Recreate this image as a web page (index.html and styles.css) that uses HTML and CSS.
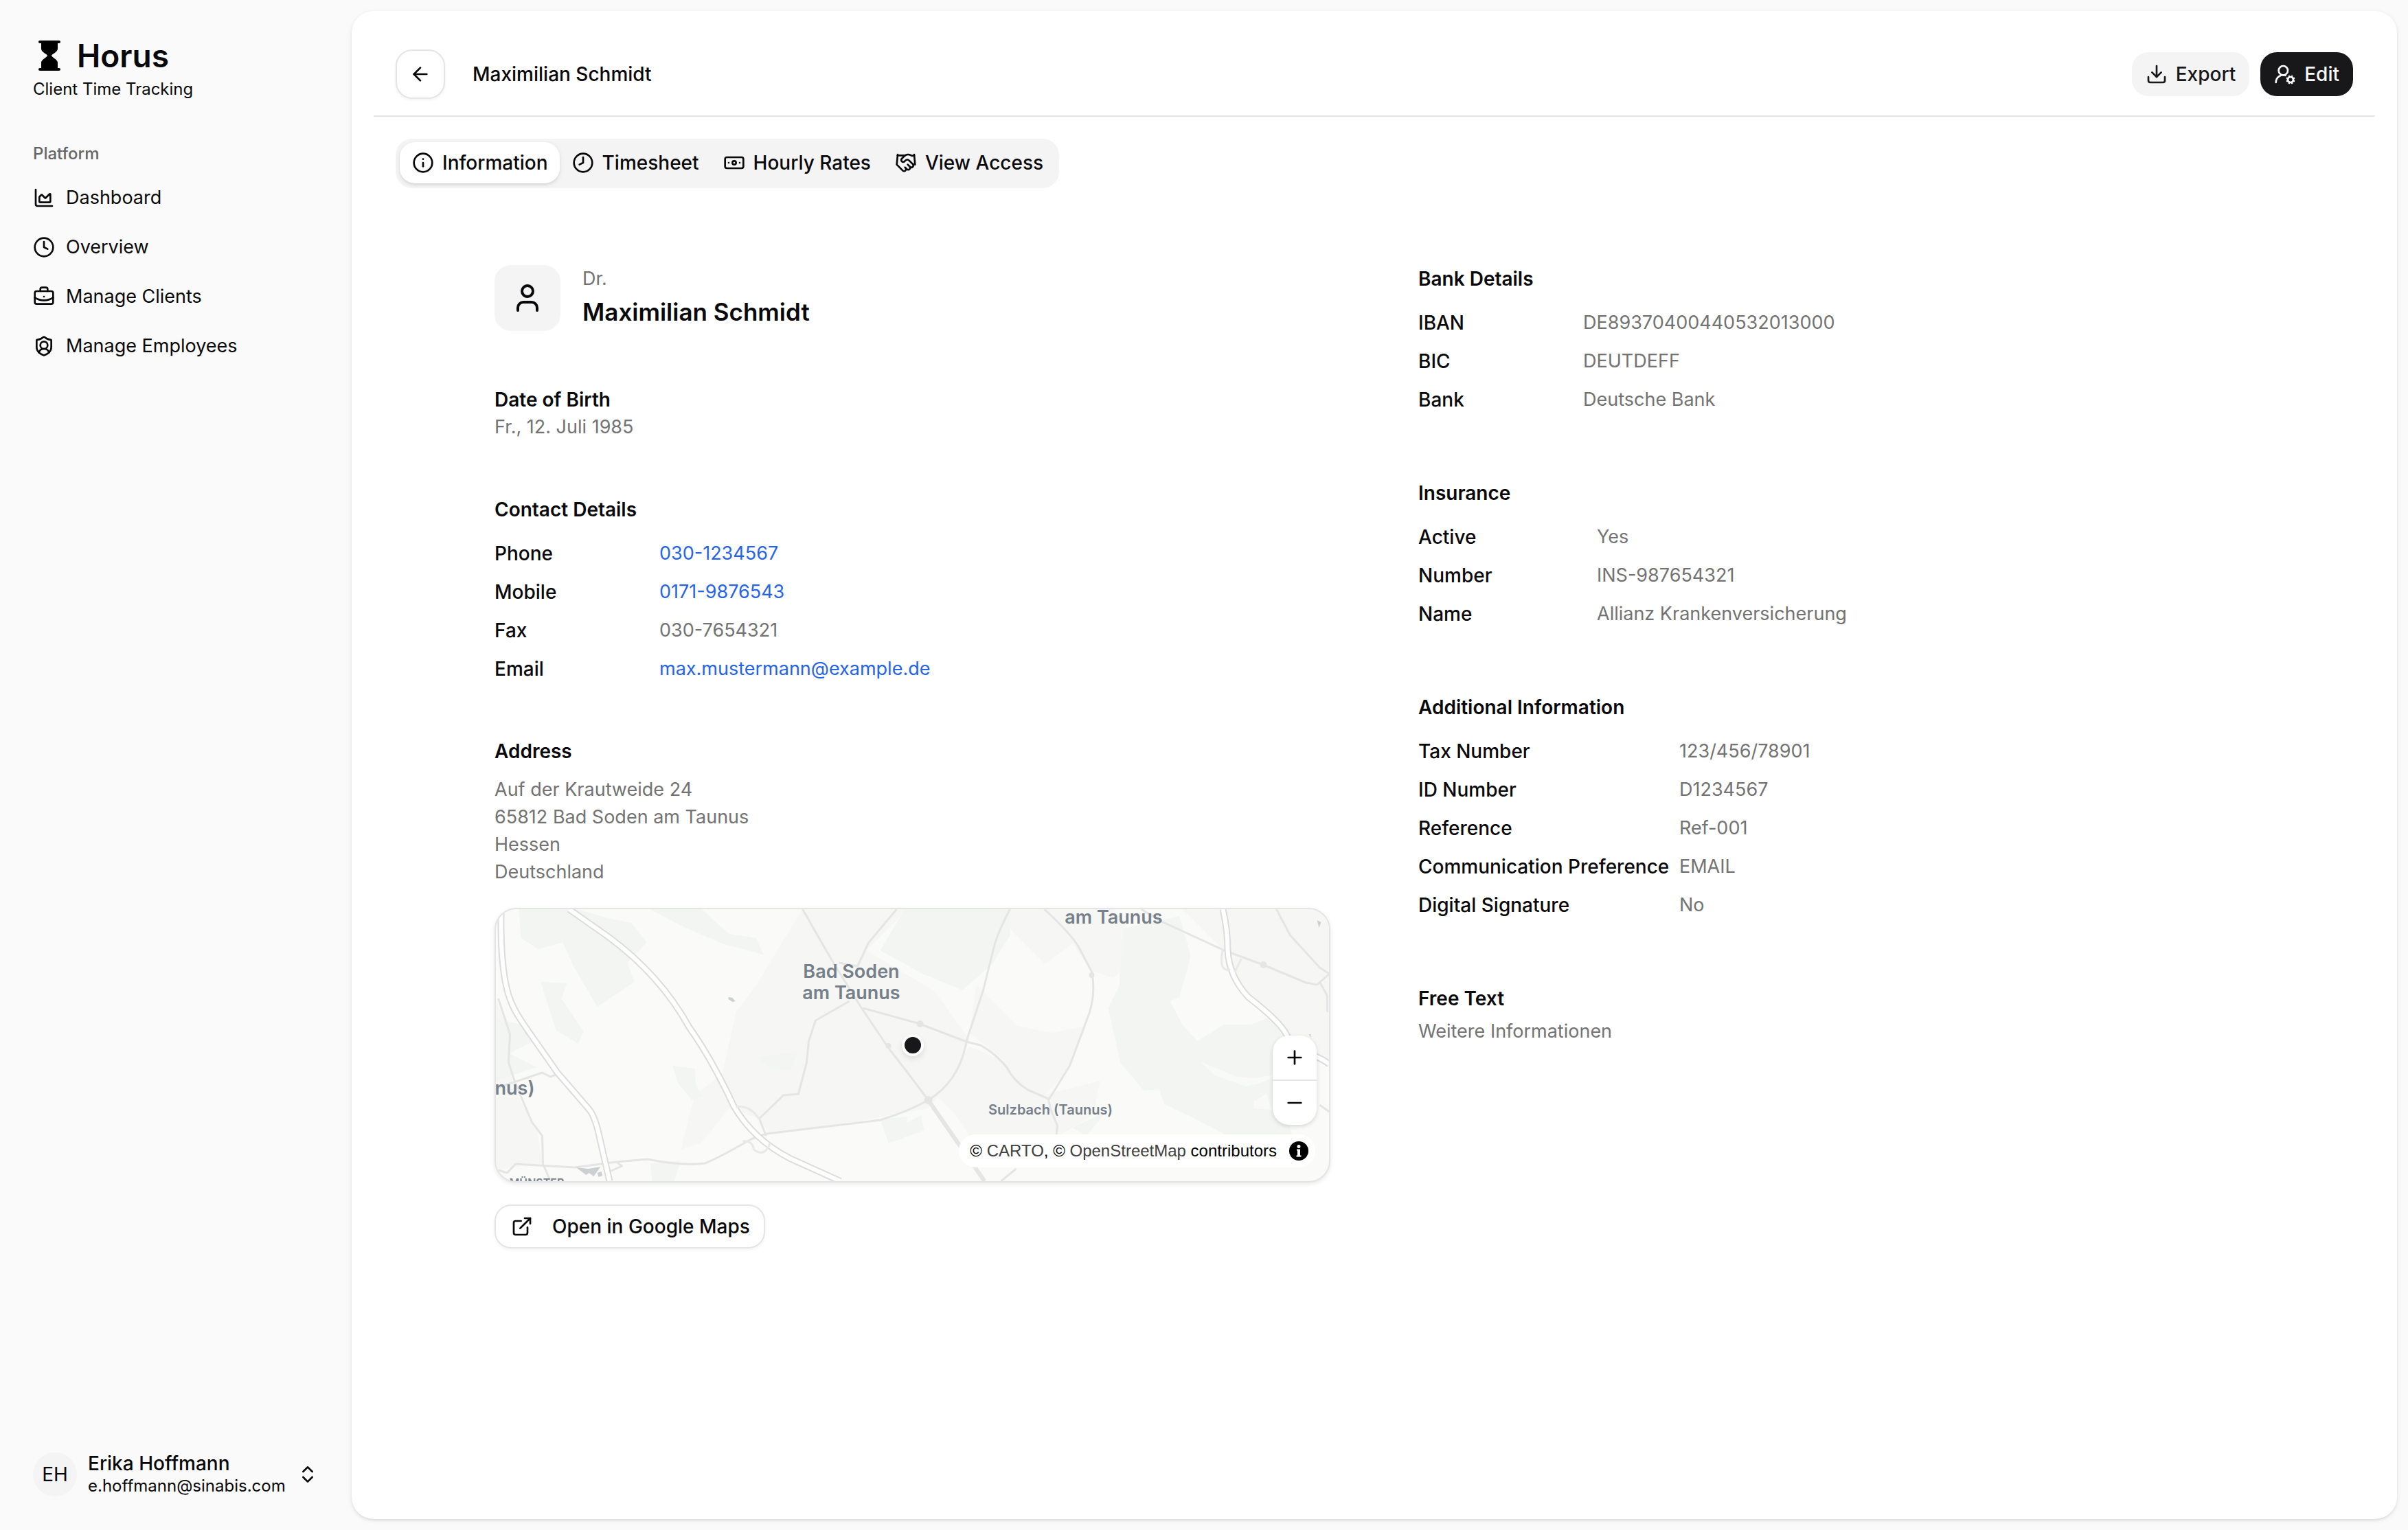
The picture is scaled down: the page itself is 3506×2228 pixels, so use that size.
FILE: index.html
```html
<!DOCTYPE html>
<html lang="en">
<head>
<meta charset="utf-8">
<meta name="viewport" content="width=device-width, initial-scale=1">
<title>Horus – Maximilian Schmidt</title>
<link rel="stylesheet" href="styles.css">
</head>
<body>
<div class="app">
  <aside class="sidebar">
    <div class="brand">
      <div class="brand-row">
        <svg class="brand-mark" viewBox="0 0 32 44" aria-hidden="true"><path d="M2 0h28a2 2 0 0 1 0 4h-2v8c0 5-9 8-9 10s9 6 9 10v8h2a2 2 0 0 1 0 4H2a2 2 0 0 1 0-4h2v-8c0-4 9-8 9-10S4 17 4 12V4H2a2 2 0 0 1 0-4z"/></svg>
        <span class="brand-name">Horus</span>
      </div>
      <p class="brand-tagline">Client Time Tracking</p>
    </div>
    <nav class="nav" aria-label="Platform">
      <p class="nav-label">Platform</p>
      <a class="nav-link" href="#dashboard"><svg class="icon" viewBox="0 0 24 24"><path d="M3 3v16a2 2 0 0 0 2 2h16"/><path d="M7 11.207a.5.5 0 0 1 .146-.353l2-2a.5.5 0 0 1 .708 0l3.292 3.292a.5.5 0 0 0 .708 0l4.292-4.292a.5.5 0 0 1 .854.353V16a1 1 0 0 1-1 1H8a1 1 0 0 1-1-1z"/></svg>Dashboard</a>
      <a class="nav-link" href="#overview"><svg class="icon" viewBox="0 0 24 24"><circle cx="12" cy="12" r="10"/><path d="M12 6v6l4 2"/></svg>Overview</a>
      <a class="nav-link" href="#clients"><svg class="icon" viewBox="0 0 24 24"><path d="M12 12h.01"/><path d="M16 6V4a2 2 0 0 0-2-2h-4a2 2 0 0 0-2 2v2"/><path d="M22 13a18.150 18.150 0 0 1-20 0"/><rect width="20" height="14" x="2" y="6" rx="2"/></svg>Manage Clients</a>
      <a class="nav-link" href="#employees"><svg class="icon" viewBox="0 0 24 24"><path d="M20 13c0 5-3.500 7.500-7.660 8.950a1 1 0 0 1-.67-.01C7.500 20.500 4 18 4 13V6a1 1 0 0 1 1-1c2 0 4.500-1.200 6.240-2.720a1.170 1.170 0 0 1 1.520 0C14.510 3.810 17 5 19 5a1 1 0 0 1 1 1z"/><path d="M6.376 18.910a6 6 0 0 1 11.249.003"/><circle cx="12" cy="11" r="4"/></svg>Manage Employees</a>
    </nav>
    <button class="account" type="button">
      <span class="account-avatar">EH</span>
      <span class="account-text">
        <span class="account-name">Erika Hoffmann</span>
        <span class="account-mail">e.hoffmann@sinabis.com</span>
      </span>
      <svg class="icon" viewBox="0 0 24 24"><path d="m7 15 5 5 5-5"/><path d="m7 9 5-5 5 5"/></svg>
    </button>
  </aside>

  <main class="panel">
    <header class="topbar">
      <button class="back" type="button" aria-label="Back"><svg class="icon" viewBox="0 0 24 24"><path d="m12 19-7-7 7-7"/><path d="M19 12H5"/></svg></button>
      <h1 class="page-title">Maximilian Schmidt</h1>
      <div class="actions">
        <button class="btn btn-secondary" type="button"><svg class="icon" viewBox="0 0 24 24"><path d="M21 15v4a2 2 0 0 1-2 2H5a2 2 0 0 1-2-2v-4"/><path d="m7 10 5 5 5-5"/><path d="M12 15V3"/></svg>Export</button>
        <button class="btn btn-primary" type="button"><svg class="icon" viewBox="0 0 24 24"><path d="m14.305 19.530.923-.382"/><path d="m15.228 16.852-.923-.383"/><path d="m16.852 15.228-.383-.923"/><path d="m16.852 20.772-.383.924"/><path d="m19.148 15.228.383-.923"/><path d="m19.530 21.696-.382-.924"/><path d="M2 21a8 8 0 0 1 10.434-7.620"/><path d="m20.772 16.852.924-.383"/><path d="m20.772 19.148.924.383"/><circle cx="10" cy="8" r="5"/><circle cx="18" cy="18" r="3"/></svg>Edit</button>
      </div>
    </header>

    <div class="body">
      <div class="tabs" role="tablist">
        <button class="tab is-active" role="tab" aria-selected="true" type="button"><svg class="icon" viewBox="0 0 24 24"><circle cx="12" cy="12" r="10"/><path d="M12 16v-4"/><path d="M12 8h.01"/></svg>Information</button>
        <button class="tab" role="tab" aria-selected="false" type="button"><svg class="icon" viewBox="0 0 24 24"><circle cx="12" cy="12" r="10"/><path d="M12 6v6l-4 2"/></svg>Timesheet</button>
        <button class="tab" role="tab" aria-selected="false" type="button"><svg class="icon" viewBox="0 0 24 24"><rect width="20" height="12" x="2" y="6" rx="2"/><circle cx="12" cy="12" r="2"/><path d="M6 12h.01M18 12h.01"/></svg>Hourly Rates</button>
        <button class="tab" role="tab" aria-selected="false" type="button"><svg class="icon" viewBox="0 0 24 24"><path d="m11 17 2 2a1 1 0 1 0 3-3"/><path d="m14 14 2.500 2.500a1 1 0 1 0 3-3l-3.880-3.880a3 3 0 0 0-4.240 0l-.88.88a1 1 0 1 1-3-3l2.810-2.810a5.790 5.790 0 0 1 7.060-.87l.47.28a2 2 0 0 0 1.420.25L21 4"/><path d="m21 3 1 11h-2"/><path d="M3 3 2 14l6.500 6.500a1 1 0 1 0 3-3"/><path d="M3 4h8"/></svg>View Access</button>
      </div>

      <div class="columns">
        <div class="column column-left">
          <section class="person">
            <span class="person-avatar"><svg class="icon icon-lg" viewBox="0 0 24 24"><path d="M19 21v-2a4 4 0 0 0-4-4H9a4 4 0 0 0-4 4v2"/><circle cx="12" cy="7" r="4"/></svg></span>
            <div>
              <p class="muted">Dr.</p>
              <h2 class="person-name">Maximilian Schmidt</h2>
            </div>
          </section>

          <section>
            <h3 class="heading">Date of Birth</h3>
            <p class="muted">Fr., 12. Juli 1985</p>
          </section>

          <section>
            <h3 class="heading">Contact Details</h3>
            <dl class="facts">
              <dt>Phone</dt><dd><a class="link" href="tel:030-1234567">030-1234567</a></dd>
              <dt>Mobile</dt><dd><a class="link" href="tel:0171-9876543">0171-9876543</a></dd>
              <dt>Fax</dt><dd>030-7654321</dd>
              <dt>Email</dt><dd><a class="link" href="mailto:max.mustermann@example.de">max.mustermann@example.de</a></dd>
            </dl>
          </section>

          <section>
            <h3 class="heading">Address</h3>
            <address class="address muted">Auf der Krautweide 24<br>65812 Bad Soden am Taunus<br>Hessen<br>Deutschland</address>

            <div class="map">
              <svg class="map-canvas" viewBox="0 0 1214 396" preserveAspectRatio="xMidYMid slice" role="img" aria-label="Map of Bad Soden am Taunus">
                <g class="urban">
                  <path d="M290 270L330 240 350 150 380 110 410 60 447 0H600L540 60 640 120 690 190 670 240 630 290 520 310 400 328 384 305 340 290 300 340 270 350z"/>
                  <path d="M640 270L690 200 750 225 800 270 880 250 870 300 820 330H690L670 300z"/>
                  <path d="M0 130L20 180 25 260 60 320 68 370 0 380zM720 0H900L940 60 900 100 868 90 840 50 800 80z"/>
                  <path d="M1000 0H1214V230L1150 180 1090 120 1060 60z"/>
                  <path d="M700 110L760 170 810 180 860 170 830 240 800 270 740 220 690 180z"/>
                </g>
                <g class="forest">
                  <path d="M34 0H118L168 14 198 20 220 48 192 78 202 106 148 142 114 84 98 48 62 58 37 42z"/>
                  <path d="M596 0H747L749 38 723 80 680 118 622 94 560 60z"/>
                  <path d="M225 0H300L340 36 380 42 390 66 330 50 270 24z"/>
                  <path d="M914 28L996 10 1012 68 996 128 982 134 1000 168 1022 192 1060 168 1100 168 1135 154 1152 186V300L1160 330H1066L1012 302 974 284 966 262 944 264 910 224 892 144 908 112z"/>
                  <path d="M258 228L290 232 292 258 302 272 286 278 266 254zM66 106L104 108 96 130 116 160 128 178 120 196 88 176zM0 160L50 170 60 190 20 210 60 230 0 250z"/>
                  <path d="M560 306L600 302 594 334 572 340zM225 370L270 366 260 396H228zM380 215L440 208 430 234 400 232z"/>
                  <path d="M580 320L620 300 624 322 590 334zM840 318L890 294 860 330z"/>
                </g>
                <path class="clearing" d="M1026 222L1080 244 1106 246 1140 240 1112 254 1092 258 1048 242zM1104 280L1122 268 1130 292 1104 290z"/>
                <g class="roads">
                  <path d="M447 0L490 75 531 141 572 202 600 238 630 278"/>
                  <path d="M584 0L543 49 527 83 500 78"/>
                  <path d="M515 134L466 162 456 192 453 223 441 269 419 271 384 305 394 330"/>
                  <path d="M535 144L615 166 686 193 706 198Q728 210 745 231 754 250 775 263L805 276"/>
                  <path d="M749 0Q734 28 727 50L710 118 686 191Q676 250 630 278 600 295 560 307L394 327 372 335Q325 362 305 370 270 374 221 364L176 368 115 376 29 371 17 384 4 380"/>
                  <path d="M799 0Q838 36 849 55L868 91Q874 120 865 150L836 228 805 278 808 291 818 315 815 345"/>
                  <path d="M940 0L970 18 1061 60 1118 81 1180 107 1196 110 1213 95"/>
                  <path d="M1137 0L1157 38 1200 85 1214 94M1200 106L1211 126V150M1200 285L1214 295"/>
                  <path d="M4 130L21 182 19 223 29 254 53 310 68 330 69 371 80 396M0 261L68 238 80 244 90 240M758 378L736 396M176 368L184 374 166 382"/>
                  <path class="wide" d="M630 278L673 340 712 396"/>
                </g>
                <g class="dots"><circle cx="618" cy="167" r="5"/><circle cx="868" cy="96" r="4"/><circle cx="1118" cy="81" r="5"/><circle cx="572" cy="199" r="4"/><circle cx="630" cy="278" r="6"/></g>
                <g class="motorway-edge">
                  <path id="m1" d="M8 0V30Q9 104 23 136C32 158 50 180 90 238L135 290Q144 300 150 326L166 396"/>
                  <path id="m2" d="M107 0L164 40Q240 96 282 172 316 220 347 287 376 336 429 363L502 396"/>
                  <path id="m3" d="M1059 0Q1066 30 1066 60 1068 98 1096 128 1148 168 1154 188C1164 208 1200 212 1214 226"/>
                </g>
                <g class="motorway-fill">
                  <path d="M8 0V30Q9 104 23 136C32 158 50 180 90 238L135 290Q144 300 150 326L166 396"/>
                  <path d="M107 0L164 40Q240 96 282 172 316 220 347 287 376 336 429 363L502 396"/>
                  <path d="M1059 0Q1066 30 1066 60 1068 98 1096 128 1148 168 1154 188C1164 208 1200 212 1214 226"/>
                </g>
                <g class="ramps">
                  <path d="M350 288Q370 284 384 306M360 338Q374 336 376 350 392 362 400 340M1059 58Q1052 92 1070 88M1086 72L1076 92"/>
                </g>
                <path class="building" d="M117 376L135 378 153 375 143 389 136 384 132 387zM339 128l6 1 4 5-4 1-6-4zM1196 16l6 3-3 8zM148 384l6-2 2 6-6 2zM1184 182h3v5z"/>
                <g class="place">
                  <text x="518" y="100">Bad Soden</text>
                  <text x="518" y="131">am Taunus</text>
                  <text x="900" y="21">am Taunus</text>
                  <text x="28" y="270">nus)</text>
                  <text class="place-sm" x="808" y="299">Sulzbach (Taunus)</text>
                  <text class="place-district" x="60" y="404">MÜNSTER</text>
                </g>
              </svg>
              <span class="map-pin"></span>
              <div class="zoom">
                <button class="zoom-btn" type="button" aria-label="Zoom in"><svg class="icon" viewBox="0 0 24 24"><path d="M5 12h14"/><path d="M12 5v14"/></svg></button>
                <button class="zoom-btn" type="button" aria-label="Zoom out"><svg class="icon" viewBox="0 0 24 24"><path d="M5 12h14"/></svg></button>
              </div>
              <div class="credits">
                <span>© <a href="#carto">CARTO</a>, © <a href="#osm">OpenStreetMap</a> contributors</span>
                <svg class="credits-icon" viewBox="0 0 28 28" aria-hidden="true"><circle cx="14" cy="14" r="14"/><path class="credits-i" d="M14 5a2.500 2.500 0 1 1 0 5 2.500 2.500 0 0 1 0-5zM11 11.500h5V20.500h1.500V22.500H10.500V20.500H12V13.500H11z"/></svg>
              </div>
            </div>

            <a class="btn btn-outline" href="#maps"><svg class="icon" viewBox="0 0 24 24"><path d="M15 3h6v6"/><path d="M10 14 21 3"/><path d="M18 13v6a2 2 0 0 1-2 2H5a2 2 0 0 1-2-2V8a2 2 0 0 1 2-2h6"/></svg>Open in Google Maps</a>
          </section>
        </div>

        <div class="column column-right">
          <section>
            <h3 class="heading">Bank Details</h3>
            <dl class="facts">
              <dt>IBAN</dt><dd>DE89370400440532013000</dd>
              <dt>BIC</dt><dd>DEUTDEFF</dd>
              <dt>Bank</dt><dd>Deutsche Bank</dd>
            </dl>
          </section>
          <section>
            <h3 class="heading">Insurance</h3>
            <dl class="facts facts-medium">
              <dt>Active</dt><dd>Yes</dd>
              <dt>Number</dt><dd>INS-987654321</dd>
              <dt>Name</dt><dd>Allianz Krankenversicherung</dd>
            </dl>
          </section>
          <section>
            <h3 class="heading">Additional Information</h3>
            <dl class="facts facts-wide">
              <dt>Tax Number</dt><dd>123/456/78901</dd>
              <dt>ID Number</dt><dd>D1234567</dd>
              <dt>Reference</dt><dd>Ref-001</dd>
              <dt>Communication Preference</dt><dd>EMAIL</dd>
              <dt>Digital Signature</dt><dd>No</dd>
            </dl>
          </section>
          <section>
            <h3 class="heading">Free Text</h3>
            <p class="note muted">Weitere Informationen</p>
          </section>
        </div>
      </div>
    </div>
  </main>
</div>
</body>
</html>
```

FILE: styles.css
```css
* { box-sizing: border-box; }

body {
  margin: 0;
  background: #fafafa;
  color: #09090b;
  font-family: Inter, "Liberation Sans", sans-serif;
  font-size: 28px;
  line-height: 40px;
}

h1, h2, h3, p, dl, dd { margin: 0; }

button {
  border: 0;
  background: none;
  color: inherit;
  font: inherit;
  cursor: pointer;
}

a { color: inherit; text-decoration: none; }

.icon {
  flex: none;
  width: 32px;
  height: 32px;
  fill: none;
  stroke: currentColor;
  stroke-width: 2;
  stroke-linecap: round;
  stroke-linejoin: round;
}

.icon-lg { width: 48px; height: 48px; }
.muted { color: #737373; font-size: 27px; }

.app { display: flex; min-height: 100vh; }

/* Sidebar */
.sidebar {
  display: flex;
  flex: none;
  flex-direction: column;
  width: 512px;
  padding: 48px 32px;
}

.brand { padding: 0 16px; }
.brand-row { display: flex; align-items: center; gap: 24px; padding-left: 8px; }
.brand-mark { width: 32px; height: 44px; fill: #000; }
.brand-name { font-size: 46px; font-weight: 600; line-height: 66px; }
.brand-tagline { font-size: 24px; line-height: 32px; }

.nav { display: flex; flex-direction: column; margin-top: 46px; font-size: 27px; }
.nav-label {
  padding: 16px;
  color: #666;
  font-size: 24px;
  font-weight: 500;
  line-height: 32px;
}
.nav-link { display: flex; align-items: center; gap: 16px; height: 64px; margin-bottom: 8px; padding: 0 16px; }

.account {
  display: flex;
  align-items: center;
  gap: 16px;
  margin-top: auto;
  padding: 0 16px;
  text-align: left;
}
.account-avatar {
  display: grid;
  place-items: center;
  width: 64px;
  height: 64px;
  border-radius: 50%;
  background: #f4f4f5;
}
.account-text { display: flex; flex: 1; flex-direction: column; }
.account-name { font-weight: 500; line-height: 34px; }
.account-mail { font-size: 24px; line-height: 32px; }

/* Main panel */
.panel {
  flex: 1;
  min-width: 0;
  margin: 16px 16px 16px 0;
  border-radius: 32px;
  background: #fff;
  box-shadow: 0 2px 6px rgba(0, 0, 0, .1), 0 2px 4px -2px rgba(0, 0, 0, .1);
}

.topbar {
  display: flex;
  align-items: center;
  gap: 40px;
  margin: 0 32px;
  padding: 56px 32px 24px;
  border-bottom: 2px solid #e5e5e5;
}
.page-title { font-size: 28px; font-weight: 500; line-height: 40px; }
.back {
  display: grid;
  place-items: center;
  width: 72px;
  height: 72px;
  border: 2px solid #e5e5e5;
  border-radius: 24px;
  box-shadow: 0 2px 4px rgba(0, 0, 0, .05);
}
.actions { display: flex; gap: 16px; margin-left: auto; }

.btn {
  display: inline-flex;
  align-items: center;
  gap: 12px;
  height: 64px;
  padding: 0 20px;
  border-radius: 24px;
  font-weight: 500;
}
.btn-secondary { background: #f4f4f5; color: #18181b; }
.btn-primary { background: #18181b; color: #fafafa; }
.btn-outline {
  gap: 28px;
  padding-left: 22px;
  border: 2px solid #e5e5e5;
  box-shadow: 0 2px 4px rgba(0, 0, 0, .05);
}

.body { padding: 32px 64px; }

.tabs {
  display: flex;
  width: fit-content;
  padding: 5px 6px 7px;
  border-radius: 24px;
  background: #f4f4f5;
}
.tab {
  display: flex;
  align-items: center;
  gap: 12px;
  height: 60px;
  padding: 0 17px 0 18px;
  border-radius: 22px;
  font-weight: 500;
}
.tab.is-active {
  background: #fff;
  box-shadow: 0 2px 6px rgba(0, 0, 0, .1), 0 2px 4px -2px rgba(0, 0, 0, .1);
}

/* Detail columns */
.columns {
  display: grid;
  grid-template-columns: 1fr 1fr;
  gap: 128px;
  padding: 112px 144px 0;
}
.column { display: flex; flex-direction: column; min-width: 0; }
.column-left { gap: 80px; }
.column-right { gap: 96px; }

.heading { font-size: 28px; font-weight: 600; line-height: 40px; }

.person { display: flex; gap: 32px; }
.person-avatar {
  display: grid;
  place-items: center;
  width: 96px;
  height: 96px;
  border-radius: 24px;
  background: #f4f4f5;
}
.person-name { font-size: 35px; font-weight: 600; line-height: 56px; }

.facts {
  display: grid;
  grid-template-columns: 240px 1fr;
  row-gap: 16px;
  margin-top: 24px;
}
.facts-medium { grid-template-columns: 260px 1fr; }
.facts-wide { grid-template-columns: 380px 1fr; }
.facts dt { font-weight: 500; }
.facts dd { color: #737373; font-size: 27px; }
.facts .link { color: #2563eb; }
.address { margin-top: 16px; font-style: normal; }
.note { margin-top: 8px; }

/* Map */
.map {
  position: relative;
  height: 400px;
  margin: 32px 0;
  overflow: hidden;
  border: 2px solid #e5e5e5;
  border-radius: 32px;
  background: #fafaf8;
  box-shadow: 0 2px 6px rgba(0, 0, 0, .1);
}
.map-canvas { display: block; width: 100%; height: 100%; }
.urban { fill: #f6f6f5; }
.forest { fill: #f3f5f2; }
.clearing { fill: #f9faf7; }
.roads { fill: none; stroke: #e5e5e5; stroke-width: 3; stroke-linejoin: round; }
.roads .wide { stroke-width: 6; }
.dots { fill: #e5e5e5; }
.motorway-edge { fill: none; stroke: #dcdcdc; stroke-width: 10; }
.motorway-fill { fill: none; stroke: #fff; stroke-width: 6; }
.ramps { fill: none; stroke: #e9e9e9; stroke-width: 3; }
.building { fill: #cdd0d2; }
.place {
  fill: #75808a;
  font-size: 27px;
  font-weight: 600;
  text-anchor: middle;
}
.place-sm { font-size: 20px; }
.place-district { font-size: 16px; }

.map-pin {
  position: absolute;
  top: 50%;
  left: 50%;
  width: 32px;
  height: 32px;
  border: 4px solid #fff;
  border-radius: 50%;
  background: #18181b;
  box-shadow: 0 4px 8px rgba(0, 0, 0, .1);
  transform: translate(-50%, -50%);
}

.zoom {
  position: absolute;
  right: 18px;
  bottom: 82px;
  width: 64px;
  overflow: hidden;
  border-radius: 24px;
  background: #fff;
  box-shadow: 0 2px 6px rgba(0, 0, 0, .15);
}
.zoom-btn { display: grid; place-items: center; width: 64px; height: 64px; padding: 0; }
.zoom-btn + .zoom-btn { height: 66px; border-top: 2px solid #e5e5e5; }

.credits {
  position: absolute;
  right: 20px;
  bottom: 20px;
  display: flex;
  align-items: center;
  gap: 18px;
  height: 48px;
  padding: 0 10px 0 16px;
  border-radius: 24px;
  background: #fff;
  color: #000;
  font-family: "Liberation Sans", Arial, sans-serif;
  font-size: 24px;
}
.credits a { color: #404040; }
.credits-icon { width: 28px; height: 28px; }
.credits-i { fill: #fff; }
```
